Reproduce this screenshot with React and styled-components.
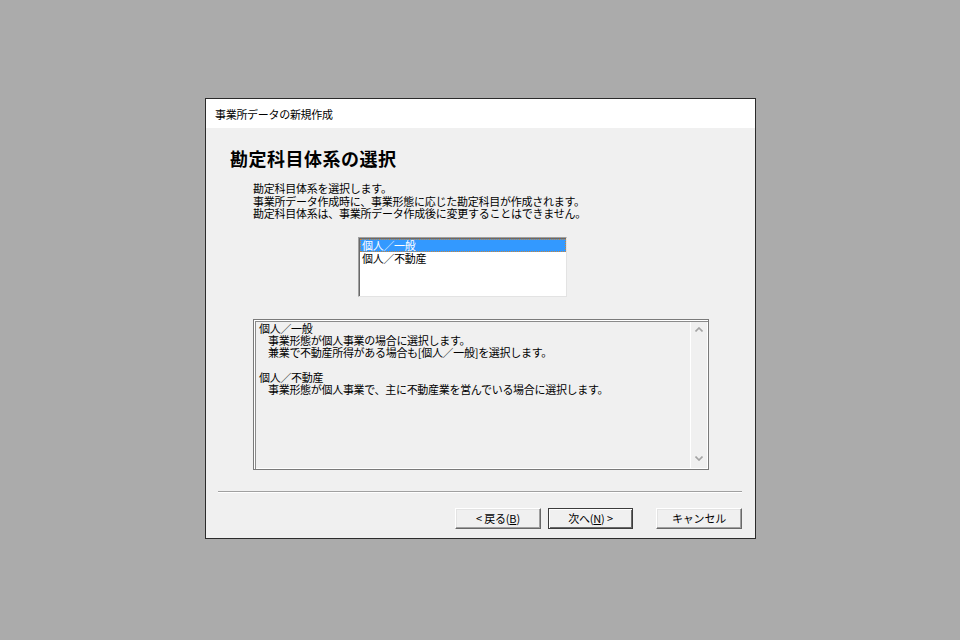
import styled, { createGlobalStyle } from "styled-components";

const FONT = `"Noto Sans CJK JP", "Noto Sans", sans-serif`;

const GlobalStyle = createGlobalStyle`
  html, body {
    margin: 0;
    padding: 0;
    background: #ababab;
  }
  body {
    font-family: ${FONT};
    color: #000;
  }
`;

const Page = styled.div`
  width: 960px;
  height: 640px;
  padding: 98px 0 0 205px;
  box-sizing: border-box;
  overflow: hidden;
`;

const Window = styled.div`
  width: 551px;
  height: 441px;
  box-sizing: border-box;
  border: 1px solid #2b2b2b;
  background: #f0f0f0;
  display: flex;
  flex-direction: column;
`;

const TitleBar = styled.div`
  height: 29px;
  background: #fff;
  display: flex;
  align-items: center;
  padding-left: 9px;
  font-size: 11px;
  letter-spacing: -0.3px;
  color: #000;
`;

const Body = styled.div`
  flex: 1;
  display: flex;
  flex-direction: column;
`;

const Heading = styled.h1`
  margin: 18px 0 0 24px;
  font-size: 18px;
  line-height: 24px;
  font-weight: 700;
  letter-spacing: 0.5px;
`;

const Intro = styled.div`
  margin: 12px 0 0 47px;
  font-size: 11px;
  line-height: 12.5px;
  letter-spacing: -0.25px;
`;

const ListBox = styled.div`
  margin: 17px 0 0 152px;
  width: 209px;
  height: 60px;
  box-sizing: border-box;
  background: #fff;
  border: 1px solid;
  border-color: #a0a0a0 #e3e3e3 #e3e3e3 #a0a0a0;
  box-shadow: inset 1px 1px 0 #696969;
  padding: 1px 0 0 1px;
`;

const ListItem = styled.div`
  height: 13px;
  box-sizing: border-box;
  padding-left: 1px;
  font-size: 11px;
  line-height: 11px;
  letter-spacing: -0.3px;
  background: ${(p) => (p.$selected ? "#3399ff" : "transparent")};
  color: ${(p) => (p.$selected ? "#fff" : "#000")};
  border: 1px dotted ${(p) => (p.$selected ? "#c8863c" : "transparent")};
`;

const InfoBox = styled.div`
  margin: 22px 0 0 47px;
  width: 456px;
  height: 151px;
  box-sizing: border-box;
  border: 1px solid #7a7a7a;
  box-shadow: inset 1px 1px 0 #fff, inset 2px 2px 0 #8a8a8a,
    inset -1px -1px 0 #fff;
  display: flex;
`;

const InfoText = styled.div`
  flex: 1;
  padding: 2px 0 0 5px;
  font-size: 11px;
  line-height: 12.3px;
  letter-spacing: -0.3px;
`;

const InfoLine = styled.div`
  padding-left: ${(p) => (p.$indent ? "9px" : "0")};
  min-height: 12.3px;
`;

const ScrollTrack = styled.div`
  width: 17px;
  margin: 2px 1px 1px 0;
  border-left: 1px solid #fff;
  display: flex;
  flex-direction: column;
  justify-content: space-between;
  align-items: center;
  padding: 5px 0 7px;
  box-sizing: border-box;
`;

const Separator = styled.div`
  margin: 21px 13px 0 12px;
  height: 1px;
  background: #a0a0a0;
  border-bottom: 1px solid #fff;
`;

const ButtonRow = styled.div`
  margin: 15px 13px 0 0;
  display: flex;
  justify-content: flex-end;
`;

const Button = styled.button`
  width: ${(p) => p.$width || 86}px;
  height: 21px;
  margin-left: ${(p) => p.$gap || 0}px;
  box-sizing: border-box;
  padding: 0;
  background: #f0f0f0;
  font-family: ${FONT};
  font-size: 11px;
  letter-spacing: -0.2px;
  color: #000;
  border: 1px solid;
  border-color: ${(p) =>
    p.$default ? "#3c3c3c" : "#fff #696969 #696969 #fff"};
  box-shadow: ${(p) =>
    p.$default
      ? "inset 1px 1px 0 #fff, inset -1px -1px 0 #696969"
      : "inset -1px -1px 0 #a0a0a0, inset 1px 1px 0 #e3e3e3"};
  display: flex;
  align-items: center;
  justify-content: center;
  white-space: pre;

  u {
    text-decoration: underline;
    text-underline-offset: 1px;
  }
`;

const Chevron = ({ up }) => (
  <svg width="8" height="5" viewBox="0 0 8 5">
    <path
      d={up ? "M0.5 4.5 L4 1 L7.5 4.5" : "M0.5 0.5 L4 4 L7.5 0.5"}
      fill="none"
      stroke="#a3a3a3"
      strokeWidth="1.6"
    />
  </svg>
);

const info = [
  { text: "個人／一般" },
  { text: "事業形態が個人事業の場合に選択します。", indent: true },
  { text: "兼業で不動産所得がある場合も[個人／一般]を選択します。", indent: true },
  { text: "" },
  { text: "個人／不動産" },
  { text: "事業形態が個人事業で、主に不動産業を営んでいる場合に選択します。", indent: true },
];

export default function App() {
  return (
    <>
      <GlobalStyle />
      <Page>
        <Window>
          <TitleBar>事業所データの新規作成</TitleBar>
          <Body>
            <Heading>勘定科目体系の選択</Heading>
            <Intro>
              <div>勘定科目体系を選択します。</div>
              <div>事業所データ作成時に、事業形態に応じた勘定科目が作成されます。</div>
              <div>勘定科目体系は、事業所データ作成後に変更することはできません。</div>
            </Intro>
            <ListBox>
              <ListItem $selected>個人／一般</ListItem>
              <ListItem>個人／不動産</ListItem>
            </ListBox>
            <InfoBox>
              <InfoText>
                {info.map((l, i) => (
                  <InfoLine key={i} $indent={l.indent}>
                    {l.text}
                  </InfoLine>
                ))}
              </InfoText>
              <ScrollTrack>
                <Chevron up />
                <Chevron />
              </ScrollTrack>
            </InfoBox>
            <Separator />
            <ButtonRow>
              <Button>
                {"< 戻る("}<u>B</u>{")"}
              </Button>
              <Button $default $width={85} $gap={7}>
                {"次へ("}<u>N</u>{") >"}
              </Button>
              <Button $gap={23}>キャンセル</Button>
            </ButtonRow>
          </Body>
        </Window>
      </Page>
    </>
  );
}
